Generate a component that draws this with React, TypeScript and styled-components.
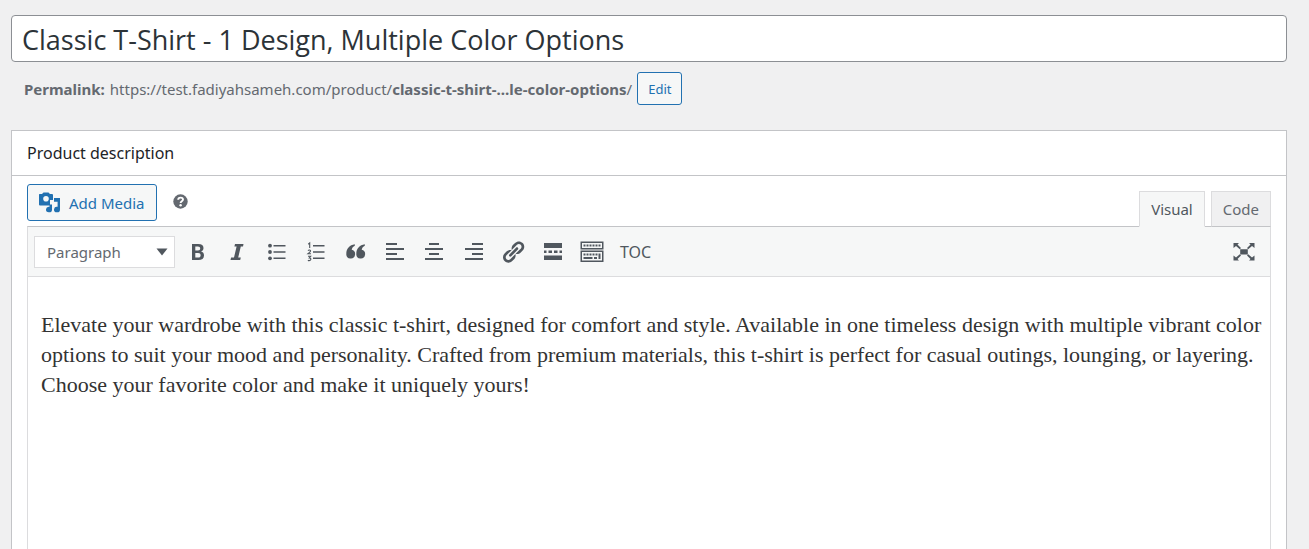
import React from "react";
import styled, { createGlobalStyle, css } from "styled-components";

const ink = "#50575e";
const blue = "#2271b1";
const line = "#c3c4c7";
const softLine = "#dcdcde";
const panel = "#f6f7f7";

const GlobalStyle = createGlobalStyle`
  *, *::before, *::after { box-sizing: border-box; }
  body {
    margin: 0;
    background: #f0f0f1;
    color: #3c434a;
    font-family: "Noto Sans", "Open Sans", sans-serif;
    font-size: 15px;
  }
  button, input, select, textarea { font: inherit; margin: 0; }
`;

const Page = styled.main`
  display: flex;
  flex-direction: column;
  min-height: 100vh;
  padding: 15px 22px 0 11px;
`;

const TitleInput = styled.input`
  width: 100%;
  height: 47px;
  padding: 4px 10px 2px;
  border: 1px solid #8c8f94;
  border-radius: 4px;
  background: #fff;
  color: #2c3338;
  font-family: "Open Sans", sans-serif;
  font-size: 27px;
`;

const Permalink = styled.div`
  display: flex;
  align-items: center;
  gap: 5px;
  margin: 10px 0 25px;
  padding-left: 13px;
  color: #646970;
  line-height: 20px;
  white-space: nowrap;
`;

const PermalinkUrl = styled.a`
  color: inherit;
  text-decoration: none;
`;

const outlined = css`
  border: 1px solid ${blue};
  border-radius: 3px;
  background: ${panel};
  color: ${blue};
  cursor: pointer;
`;

const EditButton = styled.button`
  ${outlined}
  height: 33px;
  padding: 0 10px;
  font-size: 13px;
`;

const Postbox = styled.section`
  display: flex;
  flex: 1;
  flex-direction: column;
  border: 1px solid ${line};
  border-bottom: 0;
  background: #fff;
`;

const PostboxTitle = styled.h2`
  margin: 0;
  padding: 0 15px;
  border-bottom: 1px solid ${line};
  color: #1d2327;
  font-size: 16px;
  font-weight: 400;
  line-height: 44px;
`;

const Inside = styled.div`
  display: flex;
  flex: 1;
  flex-direction: column;
  padding: 8px 15px 0;
`;

const EditorTools = styled.div`
  display: flex;
  justify-content: space-between;
  align-items: flex-end;
`;

const MediaTools = styled.div`
  display: flex;
  align-items: center;
  gap: 16px;
  padding-bottom: 5px;
`;

const MediaButton = styled.button`
  ${outlined}
  display: flex;
  align-items: center;
  gap: 8px;
  height: 37px;
  padding: 0 11px 0 10px;
`;

const HelpButton = styled.button`
  display: flex;
  padding: 0 0 3px;
  border: 0;
  background: none;
  color: #646970;
`;

const Tabs = styled.div`
  display: flex;
  gap: 6px;
`;

const Tab = styled.button<{ $active?: boolean }>`
  position: relative;
  height: 36px;
  margin-bottom: -1px;
  padding: 0 11px;
  border: 1px solid ${softLine};
  border-bottom-color: ${(p) => (p.$active ? panel : line)};
  background: ${(p) => (p.$active ? panel : "#f0f0f1")};
  color: ${(p) => (p.$active ? ink : "#646970")};
`;

const Editor = styled.div`
  display: flex;
  flex: 1;
  flex-direction: column;
  border: 1px solid ${softLine};
  border-top-color: ${line};
  border-bottom: 0;
`;

const Toolbar = styled.div`
  display: flex;
  align-items: center;
  height: 50px;
  padding: 0 8px 0 6px;
  border-bottom: 1px solid ${softLine};
  background: ${panel};
  color: ${ink};
`;

const SelectWrap = styled.div`
  position: relative;
  margin-right: 5px;
`;

const FormatSelect = styled.select`
  display: block;
  appearance: none;
  width: 141px;
  height: 32px;
  padding: 0 30px 0 12px;
  border: 1px solid ${softLine};
  border-radius: 0;
  background: #fff;
  color: #646970;
`;

const Arrow = styled.svg`
  position: absolute;
  top: 12px;
  right: 7px;
  pointer-events: none;
`;

const ToolGroup = styled.div`
  display: flex;
  justify-content: space-between;
  width: 430px;
`;

const ToolButton = styled.button`
  display: flex;
  align-items: center;
  justify-content: center;
  width: 36px;
  height: 36px;
  padding: 0;
  border: 0;
  background: none;
  color: inherit;
`;

const TextButton = styled(ToolButton)`
  width: auto;
  padding: 0 10px;
  font-size: 16px;
`;

const Spacer = styled.div`
  flex: 1;
`;

const Content = styled.textarea`
  flex: 1;
  width: 100%;
  padding: 33px 6px 0 13px;
  border: 0;
  outline: 0;
  resize: none;
  overflow: hidden;
  background: #fff;
  color: #333;
  font-family: Georgia, "Liberation Serif", serif;
  font-size: 22px;
  line-height: 30px;
`;

const Icon = ({ children }: { children: React.ReactNode }) => (
  <svg width="24" height="24" viewBox="0 0 24 24" fill="currentColor" aria-hidden="true">
    {children}
  </svg>
);

const quote = "M10.800 4.200C5.500 5 2.300 8.600 2.300 14a4.400 4.400 0 1 0 5.400-4.200C8 8 9.200 6.500 10.800 5.800Z";

const tools: { label: string; icon: React.ReactNode }[] = [
  {
    label: "Bold",
    icon: (
      <path
        fillRule="evenodd"
        d="M6 4h6.200c3.600 0 5.300 1.300 5.300 4 0 1.900-.9 3.100-2.500 3.600 2 .4 3 1.700 3 3.900 0 3-2.100 4.500-5.600 4.500H6ZM9.300 6.500v4h2.700c1.500 0 2.200-.7 2.200-2s-.8-2-2.300-2Zm0 6.400v4.600h2.900c1.600 0 2.400-.8 2.400-2.300s-.8-2.300-2.500-2.300Z"
      />
    ),
  },
  { label: "Italic", icon: <path d="M10 4h8.500l-.5 2.500h-2.200l-2.600 11h2.600l-.6 2.500H5.500l.6-2.500h2.900l2.600-11H9.400Z" /> },
  {
    label: "Bulleted list",
    icon: (
      <>
        <circle cx="5" cy="5.700" r="1.900" />
        <circle cx="5" cy="12" r="1.900" />
        <circle cx="5" cy="18.300" r="1.900" />
        <path d="M8.500 5H20.500v1.500H8.500ZM8.500 11.300H20.500v1.500H8.500ZM8.500 17.600H20.500v1.500H8.500Z" />
      </>
    ),
  },
  {
    label: "Numbered list",
    icon: (
      <>
        <path d="M9 5h11.500v1.500H9ZM9 11.300h11.500v1.500H9ZM9 17.600h11.500v1.500H9Z" />
        <path
          d="M4.200 4.200 5.700 3v5M4 10.600c.8-1 2.600-.8 2.600.4 0 .8-1.400 1.700-2.600 2.700h3M4 16.200h2.700L5.300 18c2.200 0 2 2.600 0 2.600-.6 0-1-.1-1.400-.4"
          fill="none"
          stroke="currentColor"
          strokeWidth="1.100"
        />
      </>
    ),
  },
  {
    label: "Blockquote",
    icon: (
      <>
        <path d={quote} />
        <path d={quote} transform="translate(10 0)" />
      </>
    ),
  },
  { label: "Align left", icon: <path d="M3 3h11v2H3ZM3 8h18v2H3ZM3 13h11v2H3ZM3 18h18v2H3Z" /> },
  { label: "Align center", icon: <path d="M7 3h10v2H7ZM3 8h18v2H3ZM7 13h10v2H7ZM3 18h18v2H3Z" /> },
  { label: "Align right", icon: <path d="M10 3h11v2H10ZM3 8h18v2H3ZM10 13h11v2H10ZM3 18h18v2H3Z" /> },
  {
    label: "Insert link",
    icon: (
      <path
        transform="translate(-.5 -.5) scale(1.25)"
        d="M17.740 2.760c1.680 1.690 1.680 4.410 0 6.100l-1.530 1.520c-1.120 1.120-2.700 1.470-4.140 1.090l2.620-2.610.76-.77.76-.76c.84-.84.84-2.200 0-3.040-.84-.85-2.200-.85-3.040 0l-.77.76-3.380 3.380c-.37-1.440-.02-3.020 1.100-4.140l1.520-1.530c1.690-1.680 4.420-1.680 6.100 0zM8.590 13.430l5.340-5.340c.42-.42.42-1.100 0-1.520-.44-.43-1.130-.39-1.530 0l-5.330 5.340c-.42.42-.42 1.100 0 1.520.44.43 1.130.39 1.520 0zm-.76 2.290l4.140-4.150c.38 1.440.03 3.020-1.090 4.140l-1.520 1.530c-1.690 1.680-4.410 1.680-6.100 0-1.680-1.680-1.680-4.420 0-6.100l1.530-1.520c1.120-1.120 2.700-1.470 4.140-1.100l-4.140 4.150c-.85.84-.85 2.200 0 3.050.84.84 2.200.84 3.040 0z"
      />
    ),
  },
  {
    label: "Insert Read More tag",
    icon: <path d="M3 3h18v5H3ZM3 10.500h2.500v2.500H3ZM7.500 10.500h3.500v2.500H7.500ZM13 10.500h3.500v2.500H13ZM18.500 10.500H21v2.500h-2.500ZM3 15.500h18V20H3Z" />,
  },
  {
    label: "Toolbar Toggle",
    icon: (
      <>
        <path
          fillRule="evenodd"
          d="M.5 1.500h23v8H.5ZM2 3v5h20V3ZM.5 10.500h23v11.500H.5ZM2 12v8.500h20V12Z"
        />
        <path d="M3.500 4.500h2v2h-2ZM6.500 4.500h2v2h-2ZM9.500 4.500h2v2h-2ZM12.500 4.500h2v2h-2ZM15.500 4.500h2v2h-2ZM18.500 4.500h2v2h-2ZM3.500 13.500h2v2h-2ZM6.500 13.500h2v2h-2ZM9.500 13.500h2v2h-2ZM12.500 13.500h2v2h-2ZM15.500 13.500h2v2h-2ZM18.500 13.500h2v5.500h-2ZM3.500 17h9v2h-9ZM14 17h3v2h-3Z" />
      </>
    ),
  },
];

export default function App() {
  return (
    <>
      <GlobalStyle />
      <Page>
        <TitleInput aria-label="Product name" defaultValue="Classic T-Shirt - 1 Design, Multiple Color Options" />
        <Permalink>
          <strong>Permalink:</strong>
          <PermalinkUrl href="#permalink">
            https://test.fadiyahsameh.com/product/<b>classic-t-shirt-…le-color-options</b>/
          </PermalinkUrl>
          <EditButton type="button">Edit</EditButton>
        </Permalink>

        <Postbox>
          <PostboxTitle>Product description</PostboxTitle>
          <Inside>
            <EditorTools>
              <MediaTools>
                <MediaButton type="button">
                  <svg width="23" height="24" viewBox="0 0 23 24" fill="currentColor" aria-hidden="true">
                    <path
                      fillRule="evenodd"
                      d="M1.500 3H4L5.500 1.500h5L12 3h2q1 0 1 1V9h-3v5.500H2q-1 0-1-1V4q0-1 .5-1ZM8 5a2.800 2.800 0 1 0 0 5.600A2.800 2.800 0 0 0 8 5Z"
                    />
                    <path d="M16 7h6V18.500a3 2.800 0 1 1-2.400-2.700V10.700H16ZM11.500 13.500H14V18.500a3 2.800 0 1 1-2.500-2.700Z" />
                  </svg>
                  Add Media
                </MediaButton>
                <HelpButton type="button" aria-label="Help">
                  <svg width="15" height="15" viewBox="0 0 15 15" aria-hidden="true">
                    <circle cx="7.500" cy="7.500" r="7.200" fill="currentColor" />
                    <path d="M5.200 5.800c0-3 4.800-2.800 4.800-.2 0 1.700-2.400 1.600-2.400 3.300" fill="none" stroke="#fff" strokeWidth="1.900" />
                    <circle cx="7.600" cy="11.300" r="1.200" fill="#fff" />
                  </svg>
                </HelpButton>
              </MediaTools>
              <Tabs>
                <Tab type="button" $active>Visual</Tab>
                <Tab type="button">Code</Tab>
              </Tabs>
            </EditorTools>

            <Editor>
              <Toolbar>
                <SelectWrap>
                  <FormatSelect aria-label="Block format" defaultValue="Paragraph">
                    <option>Paragraph</option>
                  </FormatSelect>
                  <Arrow width="12" height="8" viewBox="0 0 12 8" fill="currentColor" aria-hidden="true">
                    <path d="M.5.500h11L6 7.500Z" />
                  </Arrow>
                </SelectWrap>
                <ToolGroup>
                  {tools.map((t) => (
                    <ToolButton key={t.label} type="button" aria-label={t.label}>
                      <Icon>{t.icon}</Icon>
                    </ToolButton>
                  ))}
                </ToolGroup>
                <TextButton type="button">TOC</TextButton>
                <Spacer />
                <ToolButton type="button" aria-label="Fullscreen">
                  <Icon>
                    <path d="M8.200 9.200h7.600v5.200H8.200ZM1.500 3H7L5.500 4.500 9 8 7.800 9.200 4 6 1.500 8ZM22.500 3V8L20 6l-3.800 3.200L15 8l3.500-3.500L17 3ZM1.500 20.500v-5L4 17.500l3.800-3.200L9 15.500 5.500 19 7 20.500ZM22.500 20.500H17L18.500 19 15 15.500l1.200-1.200L20 17.500l2.500-2Z" />
                  </Icon>
                </ToolButton>
              </Toolbar>
              <Content
                aria-label="Product description"
                spellCheck={false}
                defaultValue="Elevate your wardrobe with this classic t-shirt, designed for comfort and style. Available in one timeless design with multiple vibrant color options to suit your mood and personality. Crafted from premium materials, this t-shirt is perfect for casual outings, lounging, or layering. Choose your favorite color and make it uniquely yours!"
              />
            </Editor>
          </Inside>
        </Postbox>
      </Page>
    </>
  );
}
